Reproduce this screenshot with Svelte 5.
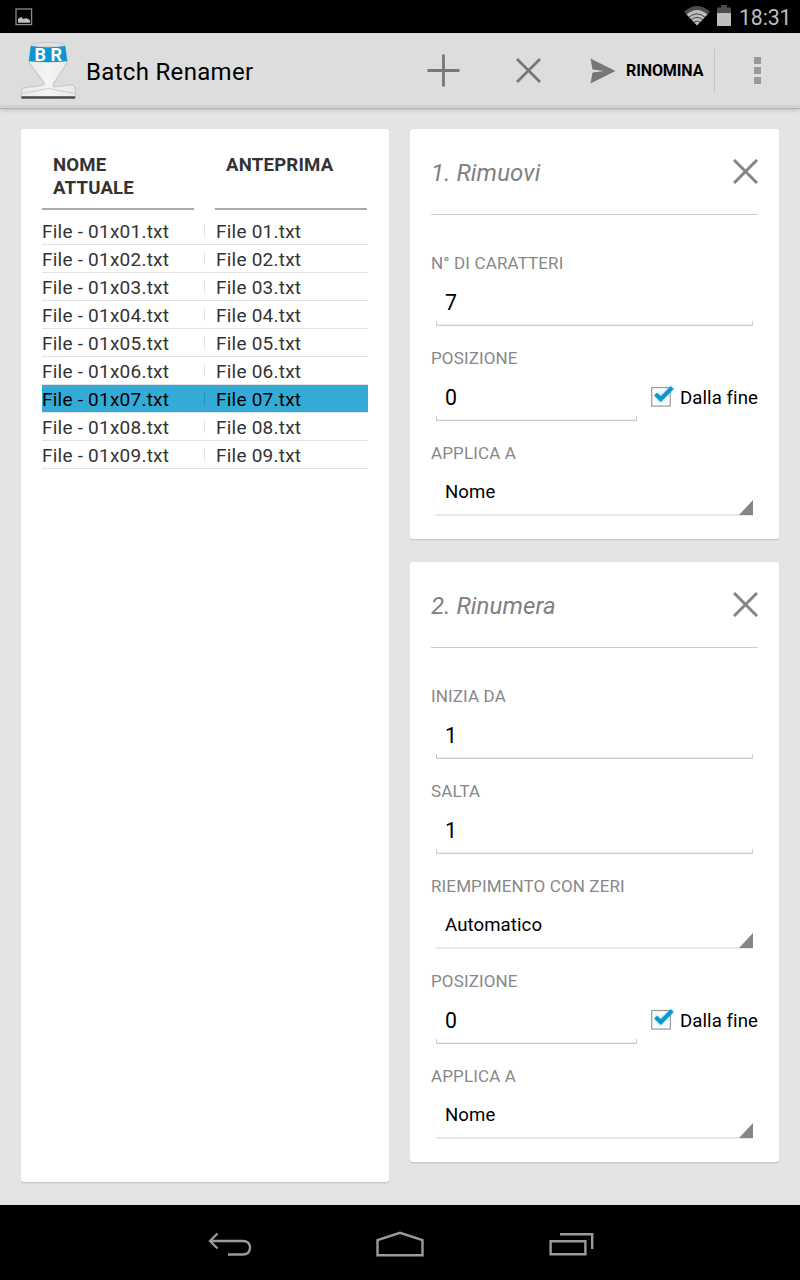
<script>
  const rows = [1, 2, 3, 4, 5, 6, 7, 8, 9];
  const cards = [
    {
      title: '1. Rimuovi',
      fields: [
        { label: 'N° DI CARATTERI', value: '7', kind: 'text' },
        { label: 'POSIZIONE', value: '0', kind: 'check' },
        { label: 'APPLICA A', value: 'Nome', kind: 'select' }
      ]
    },
    {
      title: '2. Rinumera',
      fields: [
        { label: 'INIZIA DA', value: '1', kind: 'text' },
        { label: 'SALTA', value: '1', kind: 'text' },
        { label: 'RIEMPIMENTO CON ZERI', value: 'Automatico', kind: 'select' },
        { label: 'POSIZIONE', value: '0', kind: 'check' },
        { label: 'APPLICA A', value: 'Nome', kind: 'select' }
      ]
    }
  ];
</script>

<div class="screen">
  <div class="status">
    <svg class="shot" width="18" height="18" viewBox="0 0 18 18">
      <rect x="1" y="1" width="15.6" height="15.6" fill="none" stroke="#8c8c8c" stroke-width="1.3" />
      <path d="M3 14.7V11L5 9.4L6.5 9L8 11L10 10.4L11.5 9.9L15 12.2V14.7Z" fill="#bebebe" />
    </svg>
    <svg class="wifi" width="26" height="20" viewBox="0 0 26 20">
      <path d="M0 5.8Q13 -5.6 26 5.8L22.8 9.2Q13 .8 3.2 9.2Z" fill="#4d4d4d" />
      <path d="M2.6 8.4Q13 -.6 23.4 8.4L13 19.6Z" fill="#bebebe" />
      <path d="M5 11.2Q13 4.4 21 11.2M7.4 13.7Q13 9 18.6 13.7M9.8 16.3Q13 13.6 16.2 16.3" fill="none" stroke="#333" stroke-width=".9" />
    </svg>
    <svg class="battery" width="14" height="21" viewBox="0 0 14 21">
      <path d="M0 2.5H4V0H10V2.5H14V8.5H0Z" fill="#4d4d4d" />
      <rect y="8" width="14" height="13" fill="#bebebe" />
    </svg>
    <span class="clock">18:31</span>
  </div>

  <header class="bar">
    <svg class="logo" width="58" height="60" viewBox="0 0 58 60">
      <defs>
        <linearGradient id="body" x1="0" x2="1">
          <stop offset="0" stop-color="#e9e9e9" />
          <stop offset=".5" stop-color="#f4f4f4" />
          <stop offset="1" stop-color="#e9e9e9" />
        </linearGradient>
      </defs>
      <path d="M11 5Q11.5 2.5 28 2.5Q44.5 2.5 45 5L47.3 20.5Q47 23.5 45 26L34 43Q32 46.5 34 47L51.5 44.7Q55 45.5 55.3 50V57H1.2V52Q1.2 48.5 4.5 47.7L22 45.5Q25.5 45 23.5 42L11.5 26Q9 23 9 20.5Z" fill="url(#body)" stroke="#c6c6c6" stroke-width="1.1" />
      <ellipse cx="28" cy="4.6" rx="16.5" ry="1.9" fill="#e4e4e4" stroke="#c4c4c4" stroke-width=".7" />
      <path d="M10.8 6Q28 8.5 45.2 6L47.2 21.2Q28 23.5 8.9 21.2Z" fill="#0897d0" />
      <path d="M1.8 53.5L23 49.5Q28 47.3 33.5 49.5L54.8 53.5" fill="none" stroke="#cdcdcd" stroke-width="1" />
      <rect x="1.2" y="56.2" width="54" height="2.5" rx=".8" fill="#4b4b4b" />
      <text x="14.5" y="20.6" textLength="27.5" lengthAdjust="spacing">BR</text>
    </svg>
    <h1>Batch Renamer</h1>
    <svg class="plus" width="33" height="33" viewBox="0 0 33 33">
      <path d="M16.5 .5V32.5M.5 16.5H32.5" stroke="#777" stroke-width="2.8" />
    </svg>
    <svg class="cross" width="25" height="25" viewBox="0 0 25 25">
      <path d="M1 1L24 24M24 1L1 24" stroke="#777" stroke-width="2.8" />
    </svg>
    <svg class="send" width="26" height="26" viewBox="0 0 26 26">
      <path d="M.5 .5L25.5 13L.5 25.5L2.5 14.4L14 13L2.5 11.6Z" fill="#777" />
    </svg>
    <span class="rename">RINOMINA</span>
    <i class="sep"></i>
    <span class="dots"><i></i><i></i><i></i></span>
  </header>

  <main>
    <section class="card files">
      <div class="heads">
        <h2>NOME<br />ATTUALE</h2>
        <h2>ANTEPRIMA</h2>
      </div>
      <div class="list">
        {#each rows as n}
          <div class="row" class:selected={n === 7}>
            <span class="name">File - 01x0{n}.txt</span>
            <i></i>
            <span class="preview">File 0{n}.txt</span>
          </div>
        {/each}
      </div>
    </section>

    <div class="rules">
      {#each cards as card}
        <section class="card rule">
          <div class="title">
            <h3>{card.title}</h3>
            <svg width="25" height="25" viewBox="0 0 25 25">
              <path d="M1 1L24 24M24 1L1 24" stroke="#858585" stroke-width="3" />
            </svg>
          </div>
          {#each card.fields as f}
            <div class="field">
              <div class="label">{f.label}</div>
              <div class="line">
                {#if f.kind === 'select'}
                  <div class="select">
                    <span>{f.value}</span>
                    <svg width="14" height="15" viewBox="0 0 14 15"><path d="M14 0V15H0Z" fill="#858585" /></svg>
                  </div>
                {:else}
                  <div class="input"><span>{f.value}</span><i></i></div>
                {/if}
                {#if f.kind === 'check'}
                  <div class="check">
                    <svg width="26" height="26" viewBox="0 0 26 26">
                      <rect x="1.7" y="4.5" width="18.6" height="18.6" fill="#fdfdfd" stroke="#999" stroke-width="1.2" />
                      <path class="tick" d="M4.3 12.4L7 9.8L10.8 13.2L20.7 3.2L23.6 6L10.8 18.9Z" fill="#0d96c8" />
                    </svg>
                    <span>Dalla fine</span>
                  </div>
                {/if}
              </div>
            </div>
          {/each}
        </section>
      {/each}
    </div>
  </main>

  <nav>
    <svg class="back" width="44" height="25" viewBox="0 0 44 25">
      <path d="M9.5 1.5L2 9L9.5 16.5M2 9H34.5Q42 9 42 15.5Q42 22.5 34.5 22.5H20" fill="none" stroke="#9b9b9b" stroke-width="2.3" />
    </svg>
    <svg class="home" width="48" height="26" viewBox="0 0 48 26">
      <path d="M1.5 24.3V9.2L24 1.8L46.5 9.2V24.3Z" fill="none" stroke="#9b9b9b" stroke-width="2.4" />
    </svg>
    <svg class="recent" width="46" height="24" viewBox="0 0 46 24">
      <path d="M1.6 9.2H36.4V22.3H1.6ZM11 2.2H43.2V17" fill="none" stroke="#9b9b9b" stroke-width="2.4" />
    </svg>
  </nav>
</div>

<style>
  :global(body) { margin: 0; background: #000; }
  .screen {
    width: 800px; height: 1280px; display: flex; flex-direction: column;
    font-family: Roboto, sans-serif; background: #e4e4e4; overflow: hidden; color: #000;
  }
  svg { display: block; flex: none; }
  h1, h2, h3 { margin: 0; font-weight: 400; }
  i { display: block; }
  .status { height: 33px; flex: none; background: #000; display: flex; align-items: flex-start; box-sizing: border-box; padding-left: 15px; }
  .shot { margin-top: 8px; }
  .wifi { margin: 6px 0 0 651px; }
  .battery { margin: 5px 0 0 7px; }
  .clock { margin: 5px 0 0 8px; font-size: 21.3px; line-height: 25px; letter-spacing: -.15px; color: #bebebe; white-space: nowrap; }

  .bar {
    height: 76px; flex: none; box-sizing: border-box; display: flex; align-items: center;
    background: #ddd; border-bottom: 1px solid #b0b0b0; padding-left: 20px; position: relative;
    box-shadow: inset 0 -3px #d1d1d1, 0 1px 4px rgba(0, 0, 0, .18);
  }
  .logo { margin-top: -2px; }
  .logo text { font: bold 18px Roboto, sans-serif; fill: #fff; }
  h1 { width: 341px; margin-left: 8px; font-size: 24px; line-height: 28px; margin-top: 2px; letter-spacing: .32px; white-space: nowrap; }
  .cross { margin-left: 56px; }
  .send { margin-left: 49px; }
  .rename { margin-left: 10px; width: 78px; font-size: 16px; font-weight: 700; letter-spacing: -.1px; white-space: nowrap; }
  .sep { width: 1px; height: 43px; background: #c5c5c5; margin-left: 10px; }
  .dots { display: grid; gap: 3px; margin-left: 39px; }
  .dots i { width: 7px; height: 7px; background: #999; }

  main { flex: 1; display: flex; gap: 21px; align-items: flex-start; padding: 20px 21px 0; }
  .card { background: #fff; border-radius: 3px; box-shadow: 0 1.5px #c9c9c9; box-sizing: border-box; }
  .files { width: 368px; height: 1053px; padding: 0 21px; }
  .heads { display: flex; gap: 21px; }
  h2 {
    width: 152px; height: 81px; box-sizing: border-box; padding: 25px 0 0 11px; border-bottom: 2px solid #aaa;
    font-size: 18.6px; line-height: 23px; font-weight: 700; letter-spacing: .2px; color: #333;
  }
  .list { padding-top: 7px; }
  .row {
    height: 28px; box-sizing: border-box; border-bottom: 1px solid #e3e3e3; display: flex; align-items: center;
    font-size: 19px; line-height: 25px; letter-spacing: .23px; color: #333; white-space: nowrap;
  }
  .row span { padding-top: 2px; }
  .row i { width: 1px; height: 13px; background: #e3e3e3; }
  .name { width: 162px; }
  .preview { margin-left: 11px; }
  .selected { background: #33abd6; background-clip: padding-box; color: #000; }
  .selected i { background: #2b93b8; }

  .rules { width: 369px; display: flex; flex-direction: column; gap: 23px; }
  .rule { padding: 0 21px 2px; }
  .title {
    height: 86px; box-sizing: border-box; border-bottom: 1px solid #ccc; margin-bottom: 37px;
    display: flex; justify-content: space-between; padding-top: 30px;
  }
  h3 { font-size: 24px; line-height: 28px; font-style: italic; letter-spacing: .1px; color: #808080; white-space: nowrap; }
  .field { height: 95px; }
  .label { height: 22px; font-size: 17px; line-height: 22px; letter-spacing: .13px; color: #888; white-space: nowrap; }
  .line { display: flex; height: 52px; padding-left: 5px; }
  .input, .select { flex: 1; display: flex; box-sizing: border-box; line-height: 28px; padding: 14px 0 0 9px; }
  .input { padding-top: 15px; flex-wrap: wrap; align-content: space-between; font-size: 21.3px; }
  .input i { width: calc(100% + 9px); height: 5px; margin-left: -9px; box-sizing: border-box; border: 1px solid #ccc; border-top: 0; box-shadow: inset 0 -1px #ededed; }
  .select { border-bottom: 2px solid #e8e8e8; margin-right: 5px; justify-content: space-between; font-size: 18.6px; letter-spacing: .1px; }
  .select svg { align-self: flex-end; margin-bottom: -1px; }
  .input:only-child { margin-right: 5px; }
  .check { display: flex; width: 108px; margin-left: 13px; font-size: 18.6px; line-height: 28px; letter-spacing: .08px; white-space: nowrap; }
  .check svg { margin-top: 14px; }
  .check span { margin: 15px 0 0 4px; }
  .tick { filter: drop-shadow(0 0 1.5px #5cc6ea); }

  nav { height: 75px; flex: none; background: #000; display: flex; align-items: center; padding-left: 208px; }
  .back { margin-top: 3px; }
  .home { margin: 2px 0 0 124px; }
  .recent { margin: 3px 0 0 125px; }
</style>
